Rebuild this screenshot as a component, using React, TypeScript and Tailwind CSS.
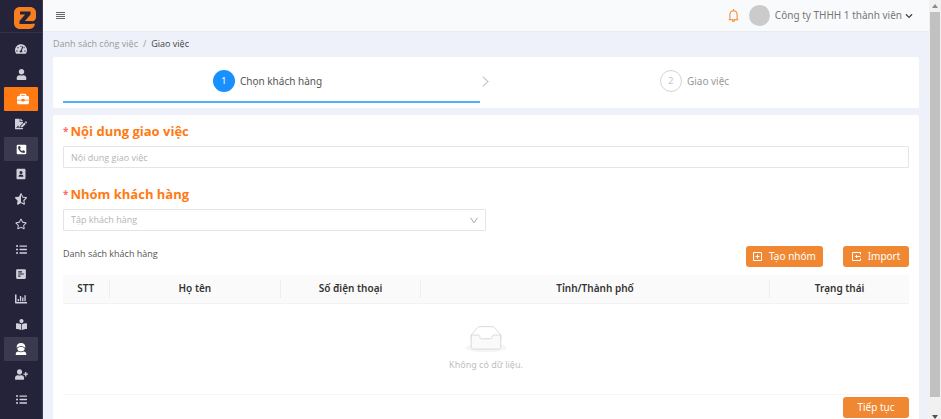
import type { ReactNode } from "react";
import {
  FaTachometerAlt,
  FaUser,
  FaFileSignature,
  FaPhoneSquareAlt,
  FaStarHalfAlt,
  FaRegStar,
  FaListUl,
  FaBookReader,
  FaUserPlus,
  FaChevronDown,
} from "react-icons/fa";
import { AiOutlineBell } from "react-icons/ai";

function BriefcaseIcon() {
  return (
    <svg viewBox="0 0 16 16" className="size-3" fill="currentColor">
      <path
        fillRule="evenodd"
        d="M3.500 4V3c0-1.100.9-2 2-2h5c1.100 0 2 .9 2 2v1h1.500c1.100 0 2 .9 2 2v3h-6V8H6v1H0V6c0-1.100.9-2 2-2zM5.500 3v1h5V3zM0 10h6v1.300h4V10h6v3c0 1.100-.9 2-2 2H2c-1.100 0-2-.9-2-2z"
      />
    </svg>
  );
}

function ContactIcon() {
  return (
    <svg viewBox="0 0 16 16" className="size-3" fill="currentColor">
      <path
        fillRule="evenodd"
        d="M3.500 1h9c.8 0 1.500.7 1.500 1.500v11c0 .8-.7 1.500-1.500 1.500h-9C2.700 15 2 14.300 2 13.500v-11C2 1.700 2.700 1 3.500 1zM8 4a2 2 0 1 0 0 4 2 2 0 0 0 0-4zM4.800 11.500h6.400c0-1.700-1.200-2.700-3.200-2.700s-3.200 1-3.200 2.700z"
      />
    </svg>
  );
}

function PollIcon() {
  return (
    <svg viewBox="0 0 16 16" className="size-3" fill="currentColor">
      <path
        fillRule="evenodd"
        d="M3 1.500h10c.8 0 1.500.7 1.500 1.500v10c0 .8-.7 1.500-1.500 1.500H3c-.8 0-1.500-.7-1.500-1.500V3c0-.8.7-1.500 1.500-1.500zM4.300 4.300v1.600h5V4.300zm0 2.900v1.600h7.400V7.200zm0 2.900v1.600h3v-1.600z"
      />
    </svg>
  );
}

function ChartIcon() {
  return (
    <svg viewBox="0 0 16 16" className="size-3" fill="currentColor">
      <path d="M0 2h2v10h14v2H1c-.6 0-1-.4-1-1zM3.500 8h1.800v3H3.500zM6.500 4h1.800v7H6.500zM9.500 6h1.800v5H9.500zM12.500 3h1.800v8h-1.800z" />
    </svg>
  );
}

function SupportIcon() {
  return (
    <svg viewBox="0 0 16 16" className="size-3" fill="currentColor">
      <path d="M8 0C4.500 0 2.300 2.200 2.300 5v1.500C3.500 5 5.500 4.200 8 4.200s4.500.8 5.700 2.300V5C13.700 2.200 11.500 0 8 0z" />
      <path d="M8 5.200c-2.400 0-4.300.8-5 2 .2 2.300 2.300 4 5 4s4.800-1.700 5-4c-.7-1.200-2.600-2-5-2z" />
      <path d="M4.300 11.300C5.300 12 6.600 12.300 8 12.300s2.700-.3 3.700-1c1.900.1 3.300 1.500 3.300 3.300V16H1v-1.400c0-1.800 1.400-3.200 3.300-3.300z" />
    </svg>
  );
}

function Logo() {
  return (
    <svg viewBox="0 0 22 22" className="size-[22px]" role="img" aria-label="Z">
      <path
        fill="#f77f22"
        d="M6 0h10c3.500 0 6 2.400 6 5.500v4.500c0 2.500-1.600 4.300-4 4.300h-3v2.500h6c-.4 3-2.300 5.200-5.500 5.200H6c-3.600 0-6-2.400-6-6V6c0-3.600 2.400-6 6-6z"
      />
      <path fill="#24233a" d="M6 4.500h10.500v3l-5.600 6.500h6.600v2.900H5.500v-3l5.600-6.500H6z" />
    </svg>
  );
}

type NavItem = { label: string; icon: ReactNode; state?: "active" | "group" };

const navItems: NavItem[] = [
  { label: "Tổng quan", icon: <FaTachometerAlt className="size-3" /> },
  { label: "Tài khoản", icon: <FaUser className="size-[11px]" /> },
  { label: "Công việc", icon: <BriefcaseIcon />, state: "active" },
  { label: "Hợp đồng", icon: <FaFileSignature className="size-3" /> },
  { label: "Cuộc gọi", icon: <FaPhoneSquareAlt className="size-[11px]" />, state: "group" },
  { label: "Danh bạ", icon: <ContactIcon /> },
  { label: "Đánh giá", icon: <FaStarHalfAlt className="size-3" /> },
  { label: "Yêu thích", icon: <FaRegStar className="size-3" /> },
  { label: "Danh mục", icon: <FaListUl className="size-[11px]" /> },
  { label: "Khảo sát", icon: <PollIcon /> },
  { label: "Báo cáo", icon: <ChartIcon /> },
  { label: "Hướng dẫn", icon: <FaBookReader className="size-[11px]" /> },
  { label: "Hỗ trợ", icon: <SupportIcon />, state: "group" },
  { label: "Thêm người dùng", icon: <FaUserPlus className="size-[13px]" /> },
  { label: "Danh sách", icon: <FaListUl className="size-[11px]" /> },
  { label: "Khách hàng", icon: <FaUser className="size-[11px]" /> },
];

const navStyles = {
  active: "bg-[#ff7a12] text-white pl-1",
  group: "bg-[#3a394d] text-white",
  plain: "text-[#cfd0dc]",
};

function Sidebar() {
  return (
    <aside className="flex w-[43px] shrink-0 flex-col overflow-hidden border-r border-[#3c3b55] bg-[#24233a]">
      <div className="flex h-[33px] shrink-0 items-center justify-center border-b border-[#34334b] pt-1 pl-2">
        <Logo />
      </div>
      <nav className="flex flex-col gap-px px-1 pt-1">
        {navItems.map((item) => (
          <a
            key={item.label}
            href="#"
            aria-label={item.label}
            className={`flex h-6 shrink-0 items-center justify-center rounded-[1px] ${navStyles[item.state ?? "plain"]}`}
          >
            {item.icon}
          </a>
        ))}
      </nav>
    </aside>
  );
}

function Header() {
  return (
    <header className="flex h-8 shrink-0 items-center justify-between border-b border-[#e9ecf2] bg-[#f9fafc] pr-4 pl-3">
      <button type="button" aria-label="Menu" className="text-[#666]">
        <svg viewBox="0 0 10 10" className="size-[10px]" stroke="currentColor" strokeWidth="1">
          <path d="M1 1.500h9M1 3.500h9M1 5.500h9M1 7.500h9" />
        </svg>
      </button>
      <div className="flex items-center">
        <button type="button" aria-label="Thông báo" className="mr-2 text-[#f5892f]">
          <AiOutlineBell className="size-[15px]" />
        </button>
        <button
          type="button"
          className="flex items-center font-['Noto_Sans','Open_Sans',sans-serif] text-[10px] text-[#777]"
        >
          <span className="mr-[5px] size-[21px] rounded-full bg-[#cbcbcb]" />
          Công ty THHH 1 thành viên
          <FaChevronDown className="ml-[3px] size-2 text-[#444]" />
        </button>
      </div>
    </header>
  );
}

function Steps() {
  return (
    <ol className="flex h-[51px] shrink-0 rounded-[2px] bg-white px-[10px] pb-[5px] font-['Noto_Sans','Open_Sans',sans-serif] text-[10px]">
      <li className="flex w-[49.3%] items-center justify-center border-b-2 border-[#53adfb] pt-1 pr-2 text-[#555]">
        <span className="mr-[5px] flex size-[22px] items-center justify-center rounded-full bg-[#1890ff] text-[9px] text-white">
          1
        </span>
        Chọn khách hàng
      </li>
      <li className="flex w-[10px] items-center justify-center pt-0.5 text-[#c4c4c4]">
        <svg viewBox="0 0 6 10" className="h-[11px] w-[7px] shrink-0" fill="none" stroke="currentColor">
          <path d="M.5.5 5.300 5 .5 9.500" />
        </svg>
      </li>
      <li className="flex flex-1 items-center justify-center pt-0.5 pr-[10px] text-[#999]">
        <span className="mr-[5px] flex size-[22px] items-center justify-center rounded-full border border-[#d4d4d4] text-[9px] text-[#c4c4c4]">
          2
        </span>
        Giao việc
      </li>
    </ol>
  );
}

function FieldLabel({ htmlFor, children }: { htmlFor: string; children: ReactNode }) {
  return (
    <label htmlFor={htmlFor} className="flex items-center gap-0.5 text-[13px] leading-5 font-bold text-[#ff7a12]">
      <span className="text-[10px] text-[#ff6b6d]">*</span>
      {children}
    </label>
  );
}

const actionButton =
  "flex h-[21px] items-center justify-center rounded-[3px] bg-[#f08833] font-['Noto_Sans','Open_Sans',sans-serif] text-[10px] text-white";

const columns = [
  { title: "STT", width: "w-[5.5%]" },
  { title: "Họ tên", width: "w-[20.3%]" },
  { title: "Số điện thoại", width: "w-[16.5%]" },
  { title: "Tỉnh/Thành phố", width: "w-[41.3%]" },
  { title: "Trạng thái", width: "w-[16.4%]" },
];

function CustomerTable() {
  return (
    <table className="mt-2 w-full table-fixed border-collapse font-['Noto_Sans','Open_Sans',sans-serif]">
      <thead>
        <tr className="h-7 border-b border-[#f2f2f2] bg-[#fafafa] text-[10px] text-[#333]">
          {columns.map((column, index) => (
            <th key={column.title} className={`${column.width} p-0 font-semibold`}>
              <div
                className={`flex h-[18px] items-center justify-center ${
                  index < columns.length - 1 ? "border-r border-[#eeeeee]" : ""
                }`}
              >
                {column.title}
              </div>
            </th>
          ))}
        </tr>
      </thead>
      <tbody>
        <tr className="h-[91px] border-b border-[#f5f5f5]">
          <td colSpan={columns.length} className="p-0 text-center text-[9px] text-[#c0c0c0]">
            <svg viewBox="0 -1 64 42" className="mx-auto mb-[5px] h-[27px] w-[42px]">
              <ellipse cx="32" cy="33" rx="32" ry="7" fill="#f5f5f5" />
              <g fill="none" stroke="#d9d9d9" strokeWidth="1.500">
                <path d="M55 12.760 44.854 1.258C44.367.474 43.656 0 42.907 0H21.093c-.749 0-1.460.474-1.947 1.257L9 12.761V22h46z" />
                <path
                  fill="#fafafa"
                  d="M41.613 15.931c0-1.605.994-2.930 2.227-2.931H55v18.137C55 33.260 53.680 35 52.050 35h-40.100C10.320 35 9 33.259 9 31.137V13h11.160c1.233 0 2.227 1.323 2.227 2.928v.022c0 1.605 1.005 2.901 2.237 2.901h14.752c1.232 0 2.237-1.308 2.237-2.913z"
                />
              </g>
            </svg>
            Không có dữ liệu.
          </td>
        </tr>
      </tbody>
    </table>
  );
}

function AssignmentForm() {
  return (
    <form className="mt-[7px] flex shrink-0 flex-col rounded-[2px] bg-white px-[10px] pt-1.5 pb-4">
      <FieldLabel htmlFor="content">Nội dung giao việc</FieldLabel>
      <input
        id="content"
        type="text"
        placeholder="Nội dung giao việc"
        className="mt-[5px] h-[22px] w-full rounded-[1px] border border-[#e5e5e5] px-[7px] text-[9px] placeholder:text-[#b5b5b5]"
      />
      <div className="mt-4">
        <FieldLabel htmlFor="group">Nhóm khách hàng</FieldLabel>
      </div>
      <div className="mt-[5px] grid w-1/2 items-center">
        <select
          id="group"
          className="col-start-1 row-start-1 h-[22px] w-full appearance-none rounded-[1px] border border-[#e5e5e5] bg-white px-[7px] text-[9px] text-[#b5b5b5]"
        >
          <option>Tập khách hàng</option>
        </select>
        <svg
          viewBox="0 0 8 7"
          className="pointer-events-none col-start-1 row-start-1 mr-2 h-[7px] w-2 justify-self-end"
          fill="none"
          stroke="#aaaaaa"
        >
          <path d="M.5.7 4 5.800 7.500.7" />
        </svg>
      </div>
      <div className="mt-[15px] flex items-center justify-between">
        <h2 className="pb-1.5 text-[9px] text-[#555]">Danh sách khách hàng</h2>
        <div className="flex gap-5">
          <button type="button" className={`${actionButton} w-[77px] gap-[7px]`}>
            <svg viewBox="0 0 9 9" className="size-[9px]" fill="none" stroke="currentColor">
              <path d="M.5.5h8v8h-8zM4.500 2.500v4M2.500 4.500h4" />
            </svg>
            Tạo nhóm
          </button>
          <button type="button" className={`${actionButton} w-[66px] gap-[7px]`}>
            <svg viewBox="0 0 9 9" className="size-[9px]" fill="none" stroke="currentColor">
              <path d="M8.500 2.500v-2h-8v8h8v-2M8.500 4.500h-5M5 3 3.500 4.500 5 6" />
            </svg>
            Import
          </button>
        </div>
      </div>
      <CustomerTable />
      <button type="button" className={`${actionButton} mt-0.5 w-[66px] self-end`}>
        Tiếp tục
      </button>
    </form>
  );
}

function Scrollbar() {
  return (
    <div aria-hidden="true" className="flex w-3 shrink-0 flex-col items-center bg-[#f1f1f1]">
      <svg viewBox="0 0 6 4" className="my-1 h-1 w-1.5 shrink-0" fill="#8a8a8a">
        <path d="M0 4 3 0l3 4z" />
      </svg>
      <div className="w-[10px] flex-1 bg-[#c1c1c1]" />
      <svg viewBox="0 0 6 4" className="mt-[18px] h-1 w-1.5 shrink-0" fill="#505050">
        <path d="M0 0l3 4 3-4z" />
      </svg>
    </div>
  );
}

export default function App() {
  return (
    <div className="flex h-screen overflow-hidden bg-[#eef1f9] font-['Open_Sans','Noto_Sans',sans-serif]">
      <Sidebar />
      <div className="flex min-w-0 flex-1 flex-col">
        <Header />
        <main className="flex min-h-0 flex-1 flex-col overflow-hidden px-[10px]">
          <nav aria-label="Breadcrumb" className="flex h-[25px] shrink-0 items-center gap-[5px] pb-0.5 text-[9px] text-[#999]">
            <a href="#">Danh sách công việc</a>
            <span>/</span>
            <span className="text-[#444]">Giao việc</span>
          </nav>
          <Steps />
          <AssignmentForm />
        </main>
      </div>
      <Scrollbar />
    </div>
  );
}
